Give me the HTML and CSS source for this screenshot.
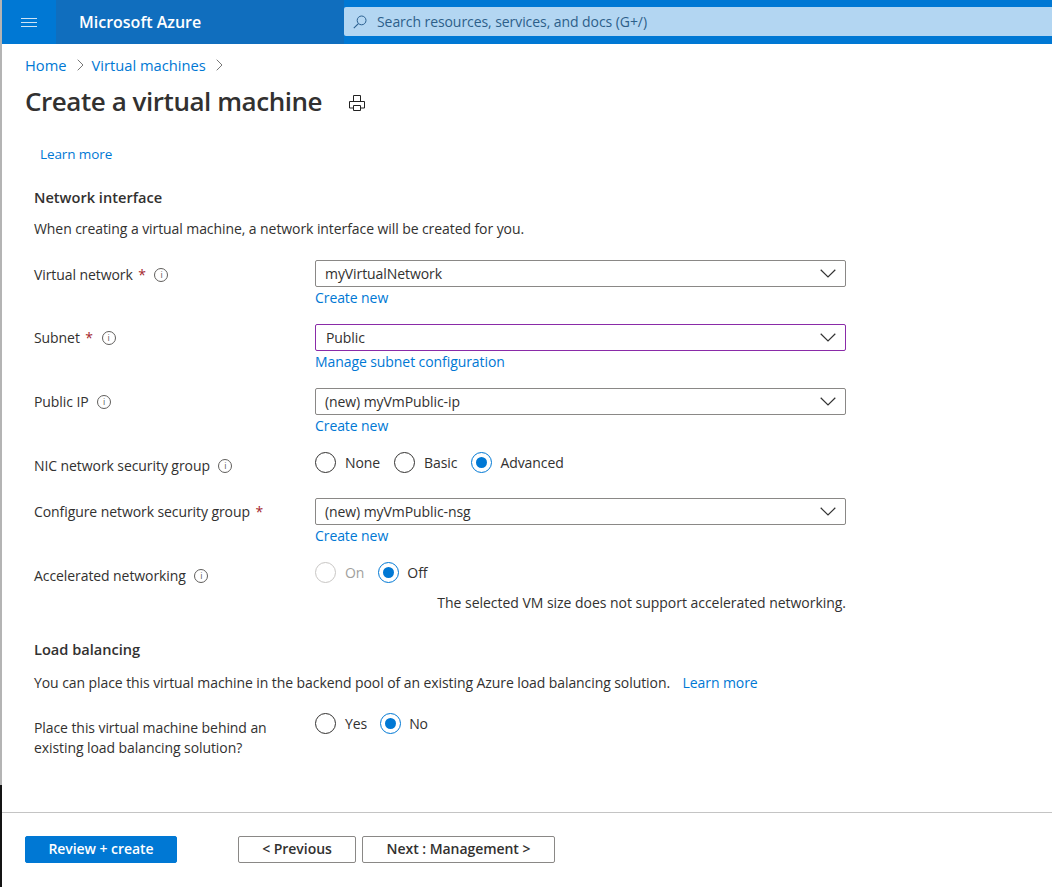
FILE: index.html
```html
<!DOCTYPE html>
<html>
<head>
	<meta charset="utf-8">
	<title>Create a virtual machine</title>
	<link rel="stylesheet" href="styles.css">
</head>
<body>
	<header class="topbar">
		<button class="menu-btn" aria-label="Menu">
			<svg width="16" height="10" viewBox="0 0 16 10"><path d="M0 1.5h16M0 5.5h16M0 9.5h16" stroke="#cfe4f6" stroke-width="1" fill="none"/></svg>
		</button>
		<div class="brand">Microsoft Azure</div>
		<div class="search">
			<svg width="14" height="14" viewBox="0 0 14 14"><circle cx="8.6" cy="5.4" r="4.4" fill="none" stroke="#2a5f8f" stroke-width="1"/><path d="M5.4 8.6L.8 13.2" stroke="#2a5f8f" stroke-width="1.1" fill="none"/></svg>
			<span>Search resources, services, and docs (G+/)</span>
		</div>
	</header>

	<main class="content">
		<nav class="crumbs">
			<a href="#">Home</a>
			<svg class="crumb-sep" width="7" height="12" viewBox="0 0 7 12"><path d="M.7.7L6 6 .7 11.3" fill="none" stroke="#777" stroke-width="1"/></svg>
			<a href="#">Virtual machines</a>
			<svg class="crumb-sep" width="7" height="12" viewBox="0 0 7 12"><path d="M.7.7L6 6 .7 11.3" fill="none" stroke="#777" stroke-width="1"/></svg>
		</nav>

		<div class="title-row">
			<h1>Create a virtual machine</h1>
			<svg class="print" width="16" height="16" viewBox="0 0 16 16" fill="none" stroke="#222" stroke-width="1">
				<path d="M4.5 6V.5h7V6"/>
				<path d="M4.5 13H.5V6.5h15V13h-4"/>
				<path d="M4.5 10.5h7v5h-7z" fill="#fff"/>
			</svg>
		</div>

		<form class="form">
			<a class="top-link" href="#">Learn more</a>

			<h2 class="section-title first">Network interface</h2>
			<p class="section-text">When creating a virtual machine, a network interface will be created for you.</p>

			<div class="row row-net">
				<label>Virtual network <span class="req">*</span> <i class="info">i</i></label>
				<div class="field">
					<div class="select"><span>myVirtualNetwork</span><svg class="chev" width="16" height="9" viewBox="0 0 16 9"><path d="M.7.8L8 8l7.3-7.2" fill="none" stroke="#333" stroke-width="1.2"/></svg></div>
					<a class="sub-link" href="#">Create new</a>
				</div>
			</div>

			<div class="row">
				<label>Subnet <span class="req">*</span> <i class="info">i</i></label>
				<div class="field">
					<div class="select select-active"><span>Public</span><svg class="chev" width="16" height="9" viewBox="0 0 16 9"><path d="M.7.8L8 8l7.3-7.2" fill="none" stroke="#333" stroke-width="1.2"/></svg></div>
					<a class="sub-link" href="#">Manage subnet configuration</a>
				</div>
			</div>

			<div class="row">
				<label>Public IP <i class="info">i</i></label>
				<div class="field">
					<div class="select"><span>(new) myVmPublic-ip</span><svg class="chev" width="16" height="9" viewBox="0 0 16 9"><path d="M.7.8L8 8l7.3-7.2" fill="none" stroke="#333" stroke-width="1.2"/></svg></div>
					<a class="sub-link" href="#">Create new</a>
				</div>
			</div>

			<div class="row row-nsg">
				<label>NIC network security group <i class="info">i</i></label>
				<div class="radios">
					<span class="radio"><b class="dot"></b>None</span>
					<span class="radio"><b class="dot"></b>Basic</span>
					<span class="radio on"><b class="dot"></b>Advanced</span>
				</div>
			</div>

			<div class="row row-cfg">
				<label>Configure network security group <span class="req">*</span></label>
				<div class="field">
					<div class="select"><span>(new) myVmPublic-nsg</span><svg class="chev" width="16" height="9" viewBox="0 0 16 9"><path d="M.7.8L8 8l7.3-7.2" fill="none" stroke="#333" stroke-width="1.2"/></svg></div>
					<a class="sub-link" href="#">Create new</a>
				</div>
			</div>

			<div class="row row-accel">
				<label>Accelerated networking <i class="info">i</i></label>
				<div class="field">
					<div class="radios">
						<span class="radio off"><b class="dot"></b>On</span>
						<span class="radio on"><b class="dot"></b>Off</span>
					</div>
					<p class="note">The selected VM size does not support accelerated networking.</p>
				</div>
			</div>

			<h2 class="section-title">Load balancing</h2>
			<p class="section-text section-text-lb">You can place this virtual machine in the backend pool of an existing Azure load balancing solution. <a href="#">Learn more</a></p>

			<div class="row row-lb">
				<label>Place this virtual machine behind an<br>existing load balancing solution?</label>
				<div class="radios">
					<span class="radio"><b class="dot"></b>Yes</span>
					<span class="radio on"><b class="dot"></b>No</span>
				</div>
			</div>
		</form>
	</main>

	<footer class="footer">
		<button class="btn btn-primary">Review + create</button>
		<button class="btn btn-prev">&lt; Previous</button>
		<button class="btn btn-next">Next : Management &gt;</button>
	</footer>
</body>
</html>
```
FILE: styles.css
```css
*, html, body{
	margin: 0;
	padding: 0;
	box-sizing: border-box;
}
html, body{
	height: 100%;
}
body{
	width: 1052px;
	height: 887px;
	overflow: hidden;
	display: flex;
	flex-direction: column;
	background: #fff;
	border-left: 2px solid #a8a8a8;
	border-image: linear-gradient(#b4b4b4 0, #b4b4b4 784px, #141414 784px, #141414 100%) 1;
	font-family: "Open Sans", "Noto Sans", sans-serif;
	font-size: 14px;
	color: #323130;
}
a{
	color: #0078d4;
	text-decoration: none;
}

/* top bar */
.topbar{
	height: 44px;
	flex: none;
	display: flex;
	align-items: center;
	background: #0078d4;
}
.menu-btn{
	width: 54px;
	height: 44px;
	flex: none;
	display: flex;
	align-items: center;
	padding-left: 19px;
	background: #0078d4;
	border: 0;
}
.brand{
	width: 288px;
	height: 44px;
	flex: none;
	padding-left: 23px;
	background: #106ebe;
	color: #fff;
	font-size: 16px;
	font-weight: 600;
	line-height: 44px;
}
.search{
	flex: 1;
	height: 29px;
	margin-top: -1px;
	display: flex;
	align-items: center;
	gap: 10px;
	padding-left: 9px;
	background: #b3d6f2;
	border-radius: 2px 0 0 2px;
	color: #2d5f8a;
	font-size: 14px;
	letter-spacing: -0.07px;
}

/* page head */
.content{
	flex: 1;
	padding: 0 0 0 23px;
}
.crumbs{
	display: flex;
	align-items: center;
	height: 20px;
	margin-top: 11px;
	font-size: 14.7px;
}
.crumb-sep{
	margin: 0 8px 0 10px;
}
.title-row{
	display: flex;
	align-items: center;
	height: 36px;
	margin-top: 8px;
}
h1{
	font-size: 26px;
	font-weight: 600;
	letter-spacing: -0.45px;
	color: #323130;
}
.print{
	margin: 4px 0 0 27px;
}

/* form */
.form{
	width: 821px;
	padding-left: 9px;
	font-size: 14px;
	letter-spacing: -0.08px;
}
.top-link{
	display: block;
	margin: 25px 0 0 6px;
	height: 20px;
	line-height: 20px;
	font-size: 13.5px;
	letter-spacing: -0.1px;
}
.section-title{
	font-size: 14.6px;
	font-weight: 600;
	line-height: 20px;
	letter-spacing: 0;
	margin-top: 26px;
}
.section-title.first{
	margin-top: 23px;
}
.section-text{
	line-height: 20px;
	margin-top: 12px;
}
.section-text-lb{
	margin-top: 14px;
}
.section-text a{
	margin-left: 9px;
}
.row{
	display: grid;
	grid-template-columns: 281px 531px;
	margin-top: 16px;
}
.row label{
	line-height: 20px;
	padding-top: 4px;
}
.row-net{
	margin-top: 21px;
}
.row-net label, .row-accel label, .row-nsg label{
	padding-top: 5px;
}
.row-nsg{
	margin-top: 15px;
}
.row-cfg{
	margin-top: 22px;
}
.row-accel{
	margin-top: 15px;
}
.row-lb{
	margin-top: 19px;
}
.row-lb label{
	padding-top: 6px;
}
.row-lb .radios{
	gap: 13px;
}
.req{
	color: #a4262c;
	margin-left: 2px;
}
.info{
	display: inline-flex;
	align-items: center;
	justify-content: center;
	width: 14px;
	height: 14px;
	margin-left: 5px;
	border: 1px solid #605e5c;
	border-radius: 50%;
	color: #605e5c;
	font-size: 9px;
	font-style: normal;
	line-height: 1;
	vertical-align: 2px;
}
.field{
	display: flex;
	flex-direction: column;
}
.select{
	height: 27px;
	display: flex;
	align-items: center;
	justify-content: space-between;
	padding: 0 9px 0 9px;
	border: 1px solid #8a8886;
	border-radius: 2px;
}
.select-active{
	padding-left: 10px;
	border-color: #8a2ba8;
}
.sub-link{
	display: block;
	line-height: 20px;
	margin-top: 1px;
}

/* radios */
.radios{
	display: flex;
	gap: 14px;
	height: 22px;
	align-items: center;
}
.radio{
	display: flex;
	align-items: center;
	gap: 9px;
}
.dot{
	width: 21px;
	height: 21px;
	border: 1px solid #323130;
	border-radius: 50%;
	display: flex;
	align-items: center;
	justify-content: center;
}
.radio.on{
	gap: 8px;
}
.radio.on .dot{
	border-color: #0078d4;
}
.radio.on .dot::after{
	content: "";
	width: 11px;
	height: 11px;
	border-radius: 50%;
	background: #0078d4;
}
.radio.off{
	color: #a19f9d;
}
.radio.off .dot{
	border-color: #c8c6c4;
}
.note{
	text-align: right;
	line-height: 20px;
	margin-top: 10px;
	letter-spacing: -0.03px;
}

/* footer */
.footer{
	flex: none;
	height: 75px;
	display: flex;
	align-items: flex-start;
	padding: 23px 0 0 23px;
	border-top: 1px solid #c4c4c4;
}
.btn{
	height: 27px;
	padding-bottom: 2px;
	font-family: inherit;
	font-size: 14px;
	font-weight: 600;
	letter-spacing: -0.05px;
	border-radius: 2px;
	color: #323130;
	background: #fff;
	border: 1px solid #8a8886;
}
.btn-primary{
	width: 152px;
	background: #0078d4;
	border-color: #0078d4;
	color: #fff;
}
.btn-prev{
	width: 118px;
	margin-left: 61px;
}
.btn-next{
	width: 193px;
	margin-left: 6px;
}
```
